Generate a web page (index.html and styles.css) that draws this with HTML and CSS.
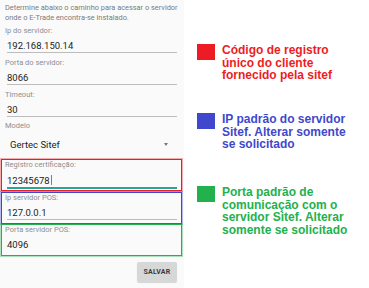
FILE: index.html
```html
<!DOCTYPE html>
<html lang="pt-BR">
<head>
    <meta charset="UTF-8">
    <meta name="viewport" content="width=device-width, initial-scale=1.0">
    <title>Configuração do servidor</title>
    <link rel="stylesheet" href="styles.css">
</head>
<body>

<div class="screen">
    <div class="form-panel">
        <p class="intro">Determine abaixo o caminho para acessar o servidor<br>onde o E-Trade encontra-se instalado.</p>

        <div class="field">
            <label class="field-label">Ip do servidor:</label>
            <div class="field-input">192.168.150.14</div>
        </div>
        <div class="field">
            <label class="field-label">Porta do servidor:</label>
            <div class="field-input">8066</div>
        </div>
        <div class="field">
            <label class="field-label">Timeout:</label>
            <div class="field-input">30</div>
        </div>

        <div class="spinner-block">
            <div class="spinner-label">Modelo</div>
            <div class="spinner">
                <span>Gertec Sitef</span>
                <span class="spinner-arrow"></span>
            </div>
        </div>

        <div class="field field-red field-focused">
            <label class="field-label">Registro certificação:</label>
            <div class="field-input">12345678<span class="cursor"></span></div>
        </div>
        <div class="field field-blue">
            <label class="field-label">Ip servidor POS:</label>
            <div class="field-input">127.0.0.1</div>
        </div>
        <div class="field field-green">
            <label class="field-label">Porta servidor POS:</label>
            <div class="field-input">4096</div>
        </div>

        <div class="actions">
            <button class="save-btn">SALVAR</button>
        </div>
    </div>

    <div class="legend">
        <div class="legend-item legend-red">
            <span class="swatch"></span>
            <p>Código de registro<br>único do cliente<br>fornecido pela sitef</p>
        </div>
        <div class="legend-item legend-blue">
            <span class="swatch"></span>
            <p>IP padrão do servidor<br>Sitef. Alterar somente<br>se solicitado</p>
        </div>
        <div class="legend-item legend-green">
            <span class="swatch"></span>
            <p>Porta padrão de<br>comunicação com o<br>servidor Sitef. Alterar<br>somente se solicitado</p>
        </div>
    </div>
</div>

</body>
</html>
```

FILE: styles.css
```css
* {
    box-sizing: border-box;
    margin: 0;
    padding: 0;
}

body {
    background-color: #fff;
    font-family: Roboto, 'Noto Sans', sans-serif;
}

.screen {
    display: flex;
    height: 288px;
    overflow: hidden;
}

.form-panel {
    width: 184px;
    flex-shrink: 0;
    padding: 3px 2px 0 1px;
    background-color: #fafafa;
}

.intro {
    margin: 0 0 3px 4px;
    font-size: 7.4px;
    line-height: 9.5px;
    color: #7a7a7a;
    white-space: nowrap;
}

.field {
    height: 32px;
    border: 1px solid transparent;
}

.field-label {
    display: block;
    padding-left: 3px;
    font-size: 7.5px;
    line-height: 9px;
    color: #8e8e8e;
}

.field-input {
    margin: 0 4px 0 5px;
    padding-top: 5px;
    font-size: 9.5px;
    line-height: 12px;
    color: #222;
    border-bottom: 1px solid #bdbdbd;
}

.field-red {
    margin-top: 1px;
    border-color: #ed1c24;
    box-shadow: 0 0 0 1px rgba(237, 28, 36, 0.35);
}

.field-blue {
    margin-top: 1px;
    border-color: #3f48cc;
    box-shadow: 0 0 0 1px rgba(63, 72, 204, 0.35);
}

.field-green {
    border-color: #22b14c;
    box-shadow: 0 0 0 1px rgba(34, 177, 76, 0.35);
}

.field-green .field-input {
    border-bottom-color: transparent;
}

.field-focused .field-input {
    padding-top: 6px;
    border-bottom: 2px solid #26a69a;
}

.cursor {
    display: inline-block;
    width: 1px;
    height: 10px;
    margin-left: 1px;
    vertical-align: -1px;
    background-color: #26a69a;
}

.spinner-label {
    padding-left: 4px;
    font-size: 7.5px;
    line-height: 10px;
    color: #8e8e8e;
}

.spinner {
    display: flex;
    justify-content: space-between;
    align-items: center;
    height: 27px;
    padding: 0 14px 0 9px;
    font-size: 9.5px;
    color: #222;
}

.spinner-arrow {
    width: 0;
    height: 0;
    border-left: 2.5px solid transparent;
    border-right: 2.5px solid transparent;
    border-top: 3px solid #777;
}

.actions {
    display: flex;
    justify-content: flex-end;
    margin-top: 6px;
    padding-right: 5px;
}

.save-btn {
    width: 40px;
    height: 20px;
    border: none;
    border-radius: 2px;
    background-color: #d6d7d7;
    box-shadow: 0 1px 1px rgba(0, 0, 0, 0.15);
    font-family: Roboto, sans-serif;
    font-size: 7px;
    font-weight: bold;
    letter-spacing: 0.2px;
    color: #3a3a3a;
}

.legend {
    flex: 1;
    padding: 44px 0 0 13px;
}

.legend-item {
    display: flex;
    gap: 7px;
}

.legend-item + .legend-item {
    margin-top: 31.5px;
}

.legend-item.legend-green {
    margin-top: 35.5px;
}

.swatch {
    flex-shrink: 0;
    width: 18px;
    height: 16px;
}

.legend-item p {
    font-family: 'Liberation Sans', Arial, sans-serif;
    font-size: 12px;
    font-weight: bold;
    line-height: 12.5px;
    white-space: nowrap;
}

.legend-red .swatch { background-color: #ed1c24; }
.legend-red p { color: #ed1c24; }

.legend-blue .swatch { background-color: #3f48cc; }
.legend-blue p { color: #3f48cc; }

.legend-green .swatch { background-color: #22b14c; }
.legend-green p { color: #22b14c; }
```
